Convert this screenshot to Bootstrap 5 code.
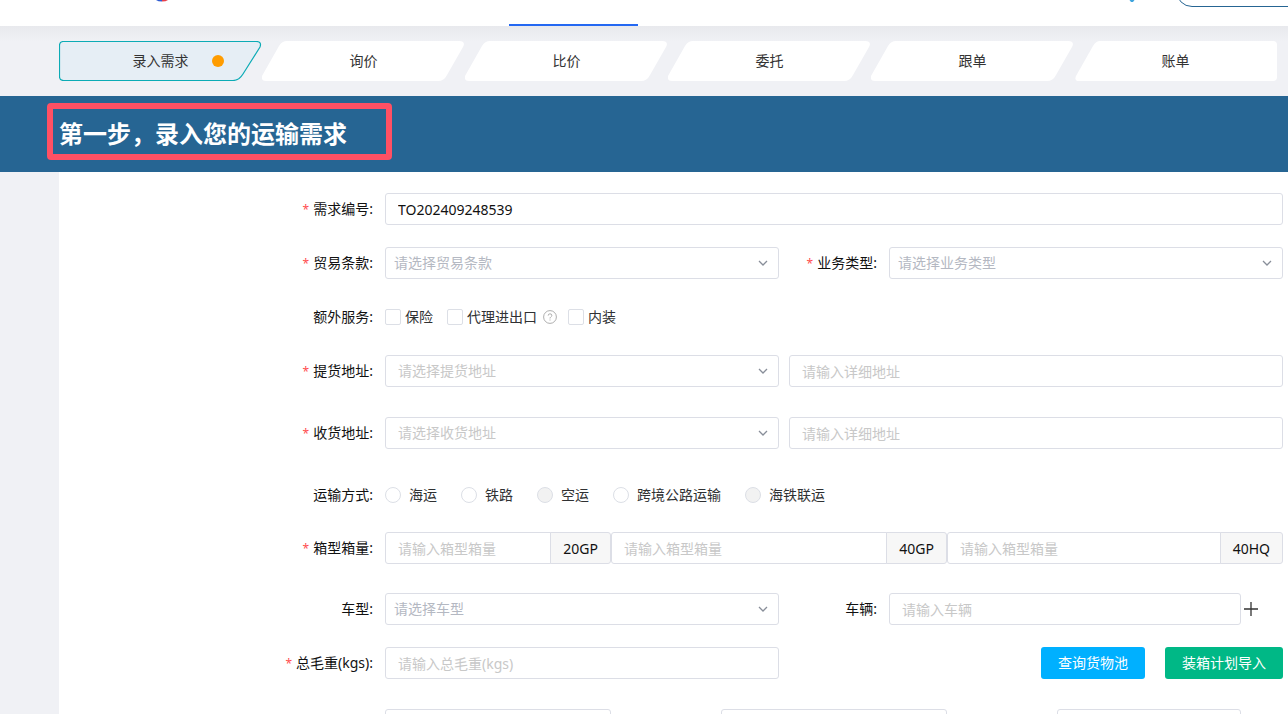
<!DOCTYPE html>
<html lang="zh-CN">
<head>
<meta charset="utf-8">
<meta name="viewport" content="width=device-width, initial-scale=1">
<title>录入需求</title>
<link rel="stylesheet" href="https://cdn.jsdelivr.net/npm/bootstrap@5.3.0/dist/css/bootstrap.min.css">
<style>
  html { scrollbar-width: none; }
  ::-webkit-scrollbar { display: none; }
  body { background: #f0f1f5; color: #111; font: 14px/20px "Noto Sans", "Noto Sans CJK SC", sans-serif; }

  /* header, scrolled almost out of view */
  .site-head { height: 26px; background: #fff; }
  .site-logo { margin-left: 155px; width: 14px; }
  .head-tab { left: 509px; width: 129px; height: 2px; background: #2468f2; }
  .head-pin { right: 151px; width: 10px; }
  .head-pill { right: -60px; top: -25px; width: 172px; height: 32px; border: 1px solid #266593; background: #fff; }

  /* steps */
  .steps-bar { padding: 15px 11px 15px 59px; background: linear-gradient(#e8e9ed, #f0f1f5 16px); }
  .step { height: 40px; padding: 0; border: 0; background: none; color: #333; line-height: 40px; }
  .step svg { inset: 0; width: 100%; height: 100%; }
  .step-dot { width: 12px; height: 12px; top: 14px; right: 38px; background: #ff9c00; }

  .banner { padding: 7px 47px 12px; background: #266593; }
  .banner h1 { width: 345px; padding: 5px 6px 0; border: 6px solid #ff5064; border-radius: 4px; color: #fff; font-size: 24px; font-weight: 700; line-height: 40px; }

  /* form */
  .sheet { margin-left: 59px; padding: 21px 5px 0 0; background: #fff; }
  .line { display: grid; grid-template-columns: 326px minmax(0, 1fr); margin-bottom: 22px; }
  .line-21 { margin-bottom: 21px; }
  .line-29 { margin-bottom: 29px; }
  .line-30 { margin-bottom: 30px; }
  .tag { padding-right: 12px; text-align: right; line-height: 32px; white-space: nowrap; }
  .req::before { content: "*"; margin-right: 4px; color: #ff4d4f; font-size: 12px; line-height: 12px; }
  .halves { display: grid; grid-template-columns: minmax(0, 1fr) 110px minmax(0, 1fr); }
  .thirds { display: grid; grid-template-columns: minmax(0, 1fr) 110px minmax(0, 1fr) 110px minmax(0, 1fr); }
  .wide { grid-column: span 2; }
  .detail { padding-left: 10px; }
  .form-control, .form-select { height: 32px; padding: 0 12px; border: 1px solid #dcdee6; border-radius: 3px; color: #111; font-size: 14px; line-height: 30px; }
  .form-control::placeholder { color: #c8c8c8; }
  .form-select { padding-left: 8px; color: #b4b8c2; background-position: right 9px center; background-size: 12px 12px;
    background-image: url("data:image/svg+xml,%3Csvg xmlns='http://www.w3.org/2000/svg' viewBox='0 0 12 12'%3E%3Cpath d='M2 4l4 4 4-4' fill='none' stroke='%23888e99' stroke-width='1.3'/%3E%3C/svg%3E"); }
  .form-select.area { padding-left: 12px; color: #c8c8c8; }
  .input-group-text { padding: 0 12px; border-color: #dcdee6; border-radius: 3px; background: #f7f7f7; color: #111; font-size: 14px; }
  .form-check-input { width: 16px; height: 16px; margin: 0; border: 1px solid #dcdfe6; }
  .form-check-input[type=checkbox] { border-radius: 2px; }
  .form-check-input:disabled { background: #f2f2f2; opacity: 1; }
  .form-check-input:disabled + label { opacity: 1; }
  .opts { height: 32px; color: #303133; }
  .opt-box { gap: 4px; margin-right: 14px; }
  .opt-hinted { margin-right: 11px; }
  .opt-radio { gap: 8px; margin-right: 24px; }
  .hint { width: 14px; height: 14px; margin-left: 2px; }
  .add { width: 42px; padding: 0 0 0 3px; border: 0; background: none; line-height: 0; text-align: left; }
  .act { height: 32px; padding: 0 17px; border: 0; border-radius: 3px; color: #fff; font-size: 14px; line-height: 32px; }
  .act:hover { color: #fff; }
  .acts { gap: 20px; }
  .act-pool { background: #00b0ff; }
  .act-plan { background: #00b886; }
</style>
</head>
<body>
<header class="site-head position-relative">
  <svg class="site-logo d-block" height="2" viewBox="0 0 14 2"><path d="M1 0Q3 1.500 7 1.500V0z" fill="#2f5bd0"/><path d="M7 0V1.500Q11 1.500 13 0z" fill="#e8404c"/></svg>
  <span class="head-tab position-absolute bottom-0"></span>
  <svg class="head-pin position-absolute top-0" height="3" viewBox="0 0 10 3"><path d="M2.500 0h5L6 2H4z" fill="#3fa4dd"/></svg>
  <div class="position-absolute top-0 end-0 h-100 w-25 overflow-hidden"><span class="head-pill position-absolute rounded-pill"></span></div>
</header>

<nav class="steps-bar d-flex" aria-label="步骤">
  <button type="button" class="step position-relative flex-fill w-100"><svg class="position-absolute" viewBox="0 0 203 40" preserveAspectRatio="none"><path d="M4.500 .5H197Q203 .5 201 6L184 33Q180 39.500 174 39.500H4.500Q.5 39.500 .5 35.500V4.500Q.5 .5 4.500 .5z" fill="#e6eef5" stroke="#0cabb5" stroke-width="1.200"/></svg><span class="position-relative">录入需求</span><span class="step-dot position-absolute rounded-circle"></span></button>
  <button type="button" class="step position-relative flex-fill w-100"><svg class="position-absolute" viewBox="0 0 203 40" preserveAspectRatio="none"><path d="M25 0H197Q204 0 201 6L185 34Q182 40 176 40H4Q-1 40 0 35L17 5Q20 0 25 0z" fill="#fff"/></svg><span class="position-relative">询价</span></button>
  <button type="button" class="step position-relative flex-fill w-100"><svg class="position-absolute" viewBox="0 0 203 40" preserveAspectRatio="none"><path d="M25 0H197Q204 0 201 6L185 34Q182 40 176 40H4Q-1 40 0 35L17 5Q20 0 25 0z" fill="#fff"/></svg><span class="position-relative">比价</span></button>
  <button type="button" class="step position-relative flex-fill w-100"><svg class="position-absolute" viewBox="0 0 203 40" preserveAspectRatio="none"><path d="M25 0H197Q204 0 201 6L185 34Q182 40 176 40H4Q-1 40 0 35L17 5Q20 0 25 0z" fill="#fff"/></svg><span class="position-relative">委托</span></button>
  <button type="button" class="step position-relative flex-fill w-100"><svg class="position-absolute" viewBox="0 0 203 40" preserveAspectRatio="none"><path d="M25 0H197Q204 0 201 6L185 34Q182 40 176 40H4Q-1 40 0 35L17 5Q20 0 25 0z" fill="#fff"/></svg><span class="position-relative">跟单</span></button>
  <button type="button" class="step position-relative flex-fill w-100"><svg class="position-absolute" viewBox="0 0 203 40" preserveAspectRatio="none"><path d="M26 0H199Q203 0 203 4V36Q203 40 199 40H5Q0 40 2 35L19 5Q22 0 26 0z" fill="#fff"/></svg><span class="position-relative">账单</span></button>
</nav>

<div class="banner"><h1 class="m-0">第一步，录入您的运输需求</h1></div>

<form class="sheet">
  <div class="line">
    <label class="tag req" for="no">需求编号:</label>
    <input class="form-control" id="no" value="TO202409248539">
  </div>
  <div class="line">
    <label class="tag req" for="terms">贸易条款:</label>
    <div class="halves">
      <select class="form-select" id="terms"><option>请选择贸易条款</option></select>
      <label class="tag req" for="biz">业务类型:</label>
      <select class="form-select" id="biz"><option>请选择业务类型</option></select>
    </div>
  </div>
  <div class="line">
    <span class="tag" id="extra">额外服务:</span>
    <div class="opts d-flex align-items-center" role="group" aria-labelledby="extra">
      <div class="opt-box d-flex align-items-center"><input class="form-check-input" type="checkbox" id="c1"><label for="c1">保险</label></div>
      <div class="opt-box opt-hinted d-flex align-items-center"><input class="form-check-input" type="checkbox" id="c2"><label for="c2">代理进出口</label>
        <svg class="hint" viewBox="0 0 14 14" fill="none" stroke="#999"><circle cx="7" cy="7" r="6.400" stroke-width=".8"/><path d="M5.200 5.600Q5.200 3.800 7 3.800T8.800 5.500Q8.800 6.400 7.800 7 7 7.500 7 8.500M7 9.500v1" stroke-width=".8"/></svg></div>
      <div class="opt-box d-flex align-items-center"><input class="form-check-input" type="checkbox" id="c3"><label for="c3">内装</label></div>
    </div>
  </div>
  <div class="line line-30">
    <label class="tag req" for="from">提货地址:</label>
    <div class="halves">
      <select class="form-select area" id="from"><option>请选择提货地址</option></select>
      <div class="wide detail"><input class="form-control" aria-label="提货详细地址" placeholder="请输入详细地址"></div>
    </div>
  </div>
  <div class="line line-30">
    <label class="tag req" for="to">收货地址:</label>
    <div class="halves">
      <select class="form-select area" id="to"><option>请选择收货地址</option></select>
      <div class="wide detail"><input class="form-control" aria-label="收货详细地址" placeholder="请输入详细地址"></div>
    </div>
  </div>
  <div class="line line-21">
    <span class="tag" id="mode">运输方式:</span>
    <div class="opts d-flex align-items-center" role="radiogroup" aria-labelledby="mode">
      <div class="opt-radio d-flex align-items-center"><input class="form-check-input" type="radio" name="mode" id="r1"><label for="r1">海运</label></div>
      <div class="opt-radio d-flex align-items-center"><input class="form-check-input" type="radio" name="mode" id="r2"><label for="r2">铁路</label></div>
      <div class="opt-radio d-flex align-items-center"><input class="form-check-input" type="radio" name="mode" id="r3" disabled><label for="r3">空运</label></div>
      <div class="opt-radio d-flex align-items-center"><input class="form-check-input" type="radio" name="mode" id="r4"><label for="r4">跨境公路运输</label></div>
      <div class="opt-radio d-flex align-items-center"><input class="form-check-input" type="radio" name="mode" id="r5" disabled><label for="r5">海铁联运</label></div>
    </div>
  </div>
  <div class="line line-29">
    <label class="tag req" for="q20">箱型箱量:</label>
    <div class="thirds">
      <div class="input-group flex-nowrap"><input class="form-control" id="q20" placeholder="请输入箱型箱量"><span class="input-group-text">20GP</span></div>
      <div class="input-group flex-nowrap wide"><input class="form-control" aria-label="40GP" placeholder="请输入箱型箱量"><span class="input-group-text">40GP</span></div>
      <div class="input-group flex-nowrap wide"><input class="form-control" aria-label="40HQ" placeholder="请输入箱型箱量"><span class="input-group-text">40HQ</span></div>
    </div>
  </div>
  <div class="line">
    <label class="tag" for="truck">车型:</label>
    <div class="halves">
      <select class="form-select" id="truck"><option>请选择车型</option></select>
      <label class="tag" for="cars">车辆:</label>
      <div class="d-flex"><input class="form-control" id="cars" placeholder="请输入车辆"><button type="button" class="add flex-shrink-0" aria-label="添加车辆"><svg width="14" height="14" viewBox="0 0 14 14"><path d="M7 0v14M0 7h14" stroke="#333" stroke-width="1.300"/></svg></button></div>
    </div>
  </div>
  <div class="line line-30">
    <label class="tag req" for="gw">总毛重(kgs):</label>
    <div class="halves">
      <input class="form-control" id="gw" placeholder="请输入总毛重(kgs)">
      <div class="wide acts d-flex justify-content-end">
        <button type="button" class="btn act act-pool">查询货物池</button>
        <button type="button" class="btn act act-plan">装箱计划导入</button>
      </div>
    </div>
  </div>
  <div class="line mb-0">
    <span class="tag"></span>
    <div class="thirds">
      <input class="form-control" aria-label="长">
      <span></span>
      <input class="form-control" aria-label="宽">
      <span></span>
      <div class="d-flex"><input class="form-control" aria-label="高"><span class="add flex-shrink-0"></span></div>
    </div>
  </div>
</form>
<script src="https://cdn.jsdelivr.net/npm/bootstrap@5.3.0/dist/js/bootstrap.bundle.min.js"></script>
</body>
</html>
